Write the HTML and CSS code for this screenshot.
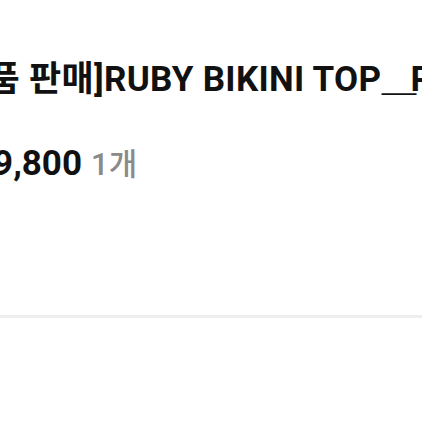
FILE: index.html
```html
<!DOCTYPE html>
<html lang="ko">
<head>
<meta charset="utf-8">
<link rel="stylesheet" href="styles.css">
</head>
<body>
<div class="page">
  <div class="info">
    <h1 class="title">[정품 판매]RUBY BIKINI TOP<span class="low-line">＿</span>RED</h1>
    <div class="price-row"><span class="price">19,800</span><span class="qty">1개</span></div>
  </div>
  <div class="divider"></div>
</div>
</body>
</html>
```

FILE: styles.css
```css
html, body {
  margin: 0;
  padding: 0;
  background: #ffffff;
}
.page {
  width: 422px;
  height: 422px;
  overflow: hidden;
  font-family: Roboto, "Noto Sans CJK KR", sans-serif;
}
.info {
  padding-top: 58px;
  height: 315px;
  box-sizing: border-box;
  display: flex;
  flex-direction: column;
}
.title {
  margin: 0 0 0 -55px;
  font-size: 35px;
  font-weight: 700;
  line-height: 44px;
  letter-spacing: 0.3px;
  color: #111111;
  white-space: nowrap;
}
.low-line {
  letter-spacing: -6px;
}
.price-row {
  margin: 42px 0 0 -27px;
  white-space: nowrap;
  line-height: 40px;
  display: flex;
  align-items: baseline;
  gap: 9px;
}
.price {
  font-size: 35px;
  font-weight: 700;
  color: #111111;
}
.qty {
  font-size: 31px;
  font-weight: 500;
  color: #8a8a8a;
}
.divider {
  height: 3px;
  background: #eeeeee;
}
```
